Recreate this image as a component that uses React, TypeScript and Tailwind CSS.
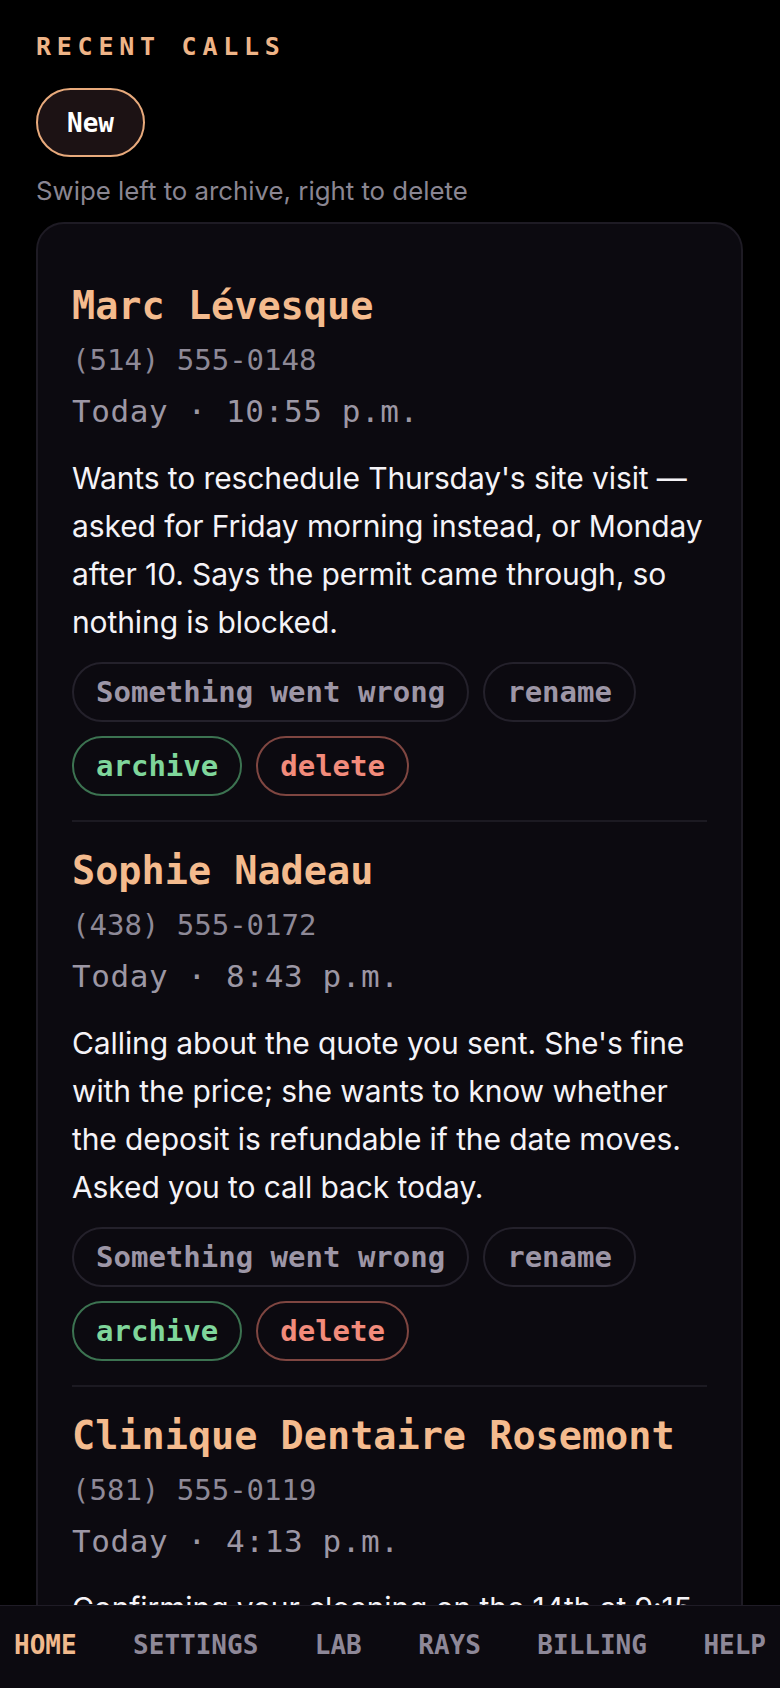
import React from "react";

const MONO = "font-['DejaVu_Sans_Mono','Liberation_Mono',monospace]";
const SANS = "font-['Inter','Noto_Sans',sans-serif]";

type Call = {
  name: string;
  phone: string;
  time: string;
  lines: string[];
};

const calls: Call[] = [
  {
    name: "Marc Lévesque",
    phone: "(514) 555-0148",
    time: "Today · 10:55 p.m.",
    lines: [
      "Wants to reschedule Thursday's site visit —",
      "asked for Friday morning instead, or Monday",
      "after 10. Says the permit came through, so",
      "nothing is blocked.",
    ],
  },
  {
    name: "Sophie Nadeau",
    phone: "(438) 555-0172",
    time: "Today · 8:43 p.m.",
    lines: [
      "Calling about the quote you sent. She's fine",
      "with the price; she wants to know whether",
      "the deposit is refundable if the date moves.",
      "Asked you to call back today.",
    ],
  },
  {
    name: "Clinique Dentaire Rosemont",
    phone: "(581) 555-0119",
    time: "Today · 4:13 p.m.",
    lines: [
      "Confirming your cleaning on the 14th at 9:15",
      "a.m. Reply to this message or call back to",
      "move it to another day this week.",
    ],
  },
];

function Chip({ label, tone }: { label: string; tone: "neutral" | "green" | "red" }) {
  const cls =
    tone === "green"
      ? "border-[#3c7351] text-[#7fd69b]"
      : tone === "red"
      ? "border-[#7f4641] text-[#f28b7b]"
      : "border-[#24212b] text-[#9d96a6]";
  return (
    <button
      className={`h-[60px] rounded-full border-2 bg-transparent px-[22px] text-[29px] font-bold leading-[34px] font-['DejaVu_Sans_Mono','Liberation_Mono',monospace] ${cls}`}
    >
      {label}
    </button>
  );
}

function Entry({ call }: { call: Call }) {
  return (
    <div className="border-b-2 border-[#1c1a22] pb-[24px] pt-[27px]">
      <div className="font-['DejaVu_Sans_Mono','Liberation_Mono',monospace] text-[38.5px] font-bold leading-[44px] text-[#f4bb8e]">
        {call.name}
      </div>
      <div className="mt-[14px] font-['DejaVu_Sans_Mono','Liberation_Mono',monospace] text-[29px] leading-[36px] text-[#8e8997]">
        {call.phone}
      </div>
      <div className="mt-[14px] font-['DejaVu_Sans_Mono','Liberation_Mono',monospace] text-[31px] leading-[38px] tracking-[0.6px] text-[#9c97a4]">
        {call.time}
      </div>
      <p className="mt-[24px] font-['Inter','Noto_Sans',sans-serif] text-[30px] leading-[48px] tracking-[-0.1px] text-[#f5f3f7]">
        {call.lines.map((l, i) => (
          <React.Fragment key={i}>
            {l}
            {i < call.lines.length - 1 && <br />}
          </React.Fragment>
        ))}
      </p>
      <div className="mt-[16px] flex flex-wrap gap-[14px]">
        <Chip label="Something went wrong" tone="neutral" />
        <Chip label="rename" tone="neutral" />
        <Chip label="archive" tone="green" />
        <Chip label="delete" tone="red" />
      </div>
    </div>
  );
}

export default function App() {
  const nav = ["HOME", "SETTINGS", "LAB", "RAYS", "BILLING", "HELP"];
  return (
    <div className="relative h-[1688px] w-full overflow-hidden bg-black">
      <div className="pl-[36px] pr-[37px] pt-[32px]">
        <h2 className="font-['DejaVu_Sans_Mono','Liberation_Mono',monospace] text-[25px] font-bold leading-[30px] tracking-[0.23em] text-[#efb487]">
          RECENT CALLS
        </h2>
        <button className="mt-[26px] flex h-[69px] w-[109px] items-center justify-center rounded-full border-2 border-[#e8aa7c] bg-[#1c1214] font-['DejaVu_Sans_Mono','Liberation_Mono',monospace] text-[26px] font-bold leading-[30px] text-white">
          New
        </button>
        <p className="mt-[18px] font-['Inter','Noto_Sans',sans-serif] text-[25.8px] leading-[32px] text-[#8a8692]">
          Swipe left to archive, right to delete
        </p>
        <div className="mt-[15px] rounded-[28px] border-2 border-[#1e1b24] bg-[#0c0a10] px-[34px] pt-[33px]">
          {calls.map((c) => (
            <Entry key={c.name} call={c} />
          ))}
        </div>
      </div>
      <nav className="absolute bottom-0 left-0 right-0 h-[83px] border-t border-[#1f1c26] bg-[#0c0a10] px-[14px] pt-[24px]">
        <div className="flex justify-between">
          {nav.map((n, i) => (
            <span
              key={n}
              className={`font-['DejaVu_Sans_Mono','Liberation_Mono',monospace] text-[26px] font-bold leading-[30px] ${
                i === 0 ? "text-[#f0b98c]" : "text-[#8e8898]"
              }`}
            >
              {n}
            </span>
          ))}
        </div>
      </nav>
    </div>
  );
}
